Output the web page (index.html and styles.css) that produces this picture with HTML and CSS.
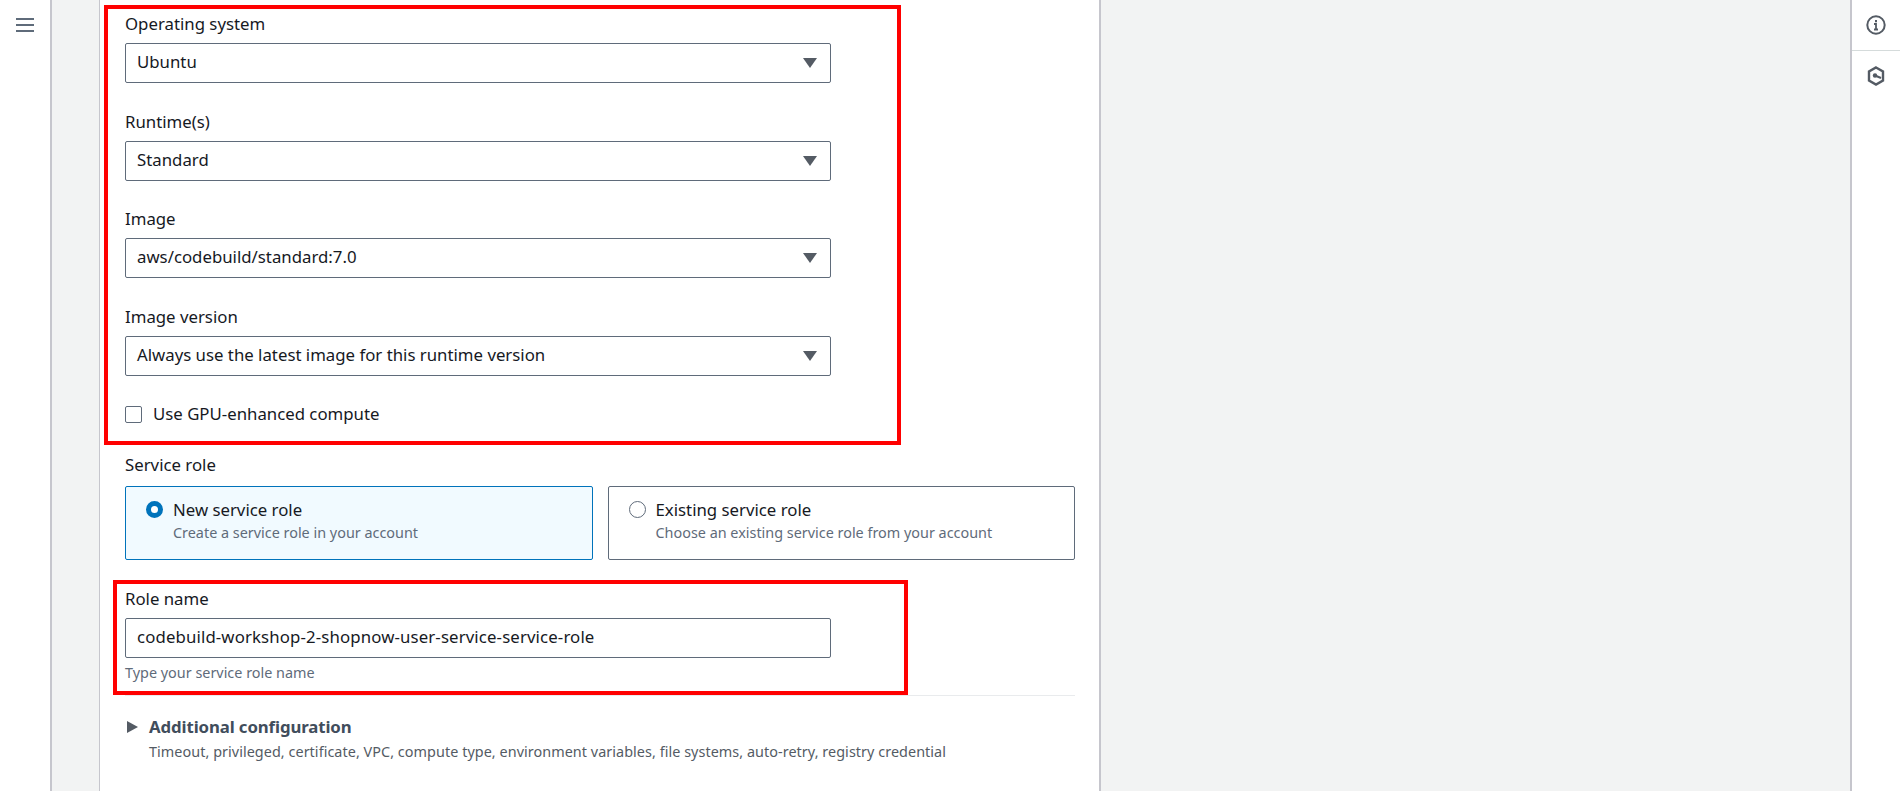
FILE: index.html
```html
<!DOCTYPE html>
<html lang="en">

<head>
    <meta charset="UTF-8">
    <meta name="viewport" content="width=device-width, initial-scale=1.0">
    <title>Create build project</title>
    <link rel="stylesheet" href="styles.css">
</head>

<body>
    <aside class="side-nav">
        <button class="icon-button" aria-label="Open navigation">
            <svg width="18" height="16" viewBox="0 0 18 16" fill="none" stroke="#5f6b7a" stroke-width="2">
                <path d="M0 2h18M0 8h18M0 14h18" />
            </svg>
        </button>
    </aside>

    <main class="content">
        <section class="card">
            <div class="field">
                <label class="field-label">Operating system</label>
                <div class="select">Ubuntu<span class="caret"></span></div>
            </div>
            <div class="field">
                <label class="field-label">Runtime(s)</label>
                <div class="select">Standard<span class="caret"></span></div>
            </div>
            <div class="field">
                <label class="field-label">Image</label>
                <div class="select">aws/codebuild/standard:7.0<span class="caret"></span></div>
            </div>
            <div class="field">
                <label class="field-label">Image version</label>
                <div class="select">Always use the latest image for this runtime version<span class="caret"></span></div>
            </div>
            <label class="checkbox-row"><span class="checkbox"></span>Use GPU-enhanced compute</label>

            <div class="role-group">
                <div class="field-label">Service role</div>
                <div class="tiles">
                    <div class="tile tile-selected">
                        <span class="radio radio-on"></span>
                        <div>
                            <div class="tile-title">New service role</div>
                            <div class="tile-desc">Create a service role in your account</div>
                        </div>
                    </div>
                    <div class="tile">
                        <span class="radio"></span>
                        <div>
                            <div class="tile-title">Existing service role</div>
                            <div class="tile-desc">Choose an existing service role from your account</div>
                        </div>
                    </div>
                </div>
            </div>

            <div class="role-name">
                <label class="field-label">Role name</label>
                <div class="input">codebuild-workshop-2-shopnow-user-service-service-role</div>
                <div class="hint">Type your service role name</div>
            </div>

            <div class="additional">
                <span class="arrow"></span>
                <div>
                    <div class="additional-title">Additional configuration</div>
                    <div class="additional-desc">Timeout, privileged, certificate, VPC, compute type, environment variables, file systems, auto-retry, registry credential</div>
                </div>
            </div>
        </section>
    </main>

    <aside class="tools">
        <div class="tool">
            <svg width="20" height="20" viewBox="0 0 20 20" fill="none" stroke="#545b64" stroke-width="2">
                <circle cx="10" cy="10" r="8.7" />
                <path d="M8 9h2v5.5M8 14.5h4" stroke-width="1.8" />
                <path d="M10 5v2.2" />
            </svg>
        </div>
        <div class="tool">
            <svg width="18" height="20" viewBox="0 0 18 20" fill="none" stroke="#545b64" stroke-width="2.4">
                <path d="M9 1.5l7 4v9l-7 4-7-4v-9z" />
                <path d="M8 9.5l6 2.5" stroke-width="2" />
                <circle cx="8" cy="9.5" r="2.2" fill="#545b64" stroke="none" />
            </svg>
        </div>
    </aside>

    <!-- red annotation boxes from the screenshot -->
    <div class="mark mark-top"></div>
    <div class="mark mark-role"></div>
</body>

</html>
```

FILE: styles.css
```css
html,
body {
    margin: 0;
    height: 791px;
    overflow: hidden;
}

body {
    display: flex;
    font-family: 'Noto Sans', 'Open Sans', sans-serif;
    font-size: 16.8px;
    color: #16191f;
    background-color: #f2f3f3;
}

.side-nav {
    width: 50px;
    flex-shrink: 0;
    background-color: #fff;
    border-right: 2px solid #c6c6cd;
}

.icon-button {
    display: block;
    margin: 17px 0 0 16px;
    padding: 0;
    border: none;
    background: none;
}

.content {
    flex-grow: 1;
    padding-left: 47px;
}

.card {
    box-sizing: border-box;
    width: 1002px;
    height: 791px;
    padding: 12px 25px 0 25px;
    background-color: #fff;
    border-left: 1px solid #c6c6cd;
    border-right: 2px solid #c6c6cd;
}

.field {
    width: 706px;
    margin-bottom: 26.5px;
}

.field-label {
    display: block;
    line-height: 23px;
    margin-bottom: 8px;
}

.select,
.input {
    box-sizing: border-box;
    height: 40px;
    line-height: 36px;
    padding: 0 11px;
    border: 1px solid #5f6b7a;
    border-radius: 2px;
    background-color: #fff;
    position: relative;
}

.input {
    letter-spacing: 0.13px;
}

.caret {
    position: absolute;
    top: 14px;
    right: 13px;
    border-left: 7px solid transparent;
    border-right: 7px solid transparent;
    border-top: 10px solid #545b64;
}

.checkbox-row {
    display: flex;
    align-items: center;
    gap: 11px;
    line-height: 24px;
}

.checkbox {
    box-sizing: border-box;
    width: 17px;
    height: 17px;
    border: 1px solid #5f6b7a;
    border-radius: 2px;
}

.role-group {
    margin-top: 27px;
}

.tiles {
    display: flex;
    gap: 15px;
    width: 950px;
    margin-top: 10px;
}

.role-group .field-label {
    margin-bottom: 0;
}

.tile {
    box-sizing: border-box;
    flex: 1;
    display: flex;
    gap: 10px;
    height: 74px;
    padding: 11px 20px;
    border: 1px solid #5f6b7a;
    border-radius: 2px;
}

.tile-selected {
    background-color: #f1faff;
    border-color: #0073bb;
}

.radio {
    box-sizing: border-box;
    width: 17px;
    height: 17px;
    margin-top: 3px;
    border: 1px solid #5f6b7a;
    border-radius: 50%;
    flex-shrink: 0;
}

.radio-on {
    border: 5px solid #0073bb;
    background-color: #fff;
}

.tile-title {
    line-height: 24px;
}

.tile-desc,
.hint {
    font-size: 14.4px;
    line-height: 22px;
    color: #5f6b7a;
}

.role-name {
    width: 706px;
    margin-top: 27px;
}

.hint {
    margin-top: 4px;
}

.additional {
    display: flex;
    gap: 12px;
    width: 950px;
    margin-top: 11px;
    padding-top: 19px;
    border-top: 1px solid #e9ebed;
}

.arrow {
    width: 0;
    height: 0;
    margin: 6px 0 0 2px;
    border-top: 6px solid transparent;
    border-bottom: 6px solid transparent;
    border-left: 11px solid #545b64;
}

.additional-title {
    margin-left: -1px;
    font-weight: 700;
    line-height: 24px;
    letter-spacing: -0.1px;
    color: #414d5c;
}

.additional-desc {
    margin-top: 2px;
    margin-left: -1px;
    font-size: 14.4px;
    line-height: 22px;
    letter-spacing: 0.05px;
    color: #545b64;
}

.tools {
    box-sizing: border-box;
    width: 50px;
    flex-shrink: 0;
    background-color: #fff;
    border-left: 2px solid #c6c6cd;
}

.tool {
    height: 50px;
    display: flex;
    align-items: center;
    justify-content: center;
}

.tool + .tool {
    border-top: 1px solid #d5dbdb;
}

.mark {
    position: absolute;
    box-sizing: border-box;
    border: 4px solid #f00;
}

.mark-top {
    left: 104px;
    top: 5px;
    width: 797px;
    height: 440px;
}

.mark-role {
    left: 113px;
    top: 580px;
    width: 795px;
    height: 115px;
}
```
